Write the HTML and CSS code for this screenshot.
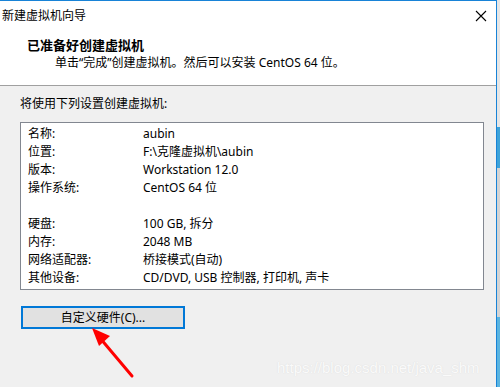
FILE: index.html
```html
<!DOCTYPE html>
<html lang="zh-CN">
<head>
  <meta charset="UTF-8">
  <meta name="viewport" content="width=device-width, initial-scale=1.0">
  <title>新建虚拟机向导</title>
  <link rel="stylesheet" href="styles.css">
</head>
<body>
  <div class="screen">
    <div class="window">
      <div class="titlebar">
        <span class="title">新建虚拟机向导</span>
        <svg class="close" width="12" height="12" viewBox="0 0 12 12">
          <path d="M1 1 L11 11 M11 1 L1 11" stroke="#000" stroke-width="1.1" fill="none"/>
        </svg>
      </div>

      <div class="header">
        <h3>已准备好创建虚拟机</h3>
        <p>单击“完成”创建虚拟机。然后可以安装 CentOS 64 位。</p>
      </div>

      <div class="content">
        <p class="intro">将使用下列设置创建虚拟机:</p>

        <div class="summary">
          <div class="row"><span class="key">名称:</span><span>aubin</span></div>
          <div class="row"><span class="key">位置:</span><span>F:\克隆虚拟机\aubin</span></div>
          <div class="row"><span class="key">版本:</span><span>Workstation 12.0</span></div>
          <div class="row"><span class="key">操作系统:</span><span>CentOS 64 位</span></div>
          <div class="row"></div>
          <div class="row"><span class="key">硬盘:</span><span>100 GB, 拆分</span></div>
          <div class="row"><span class="key">内存:</span><span>2048 MB</span></div>
          <div class="row"><span class="key">网络适配器:</span><span>桥接模式(自动)</span></div>
          <div class="row"><span class="key">其他设备:</span><span>CD/DVD, USB 控制器, 打印机, 声卡</span></div>
        </div>

        <button class="btn">自定义硬件(C)...</button>

        <svg class="arrow" width="60" height="60" viewBox="0 0 60 60">
          <line x1="48" y1="56" x2="16" y2="18" stroke="#f00" stroke-width="3" stroke-linecap="round"/>
          <polygon points="8,8 26,16 15,26" fill="#f00"/>
        </svg>

        <div class="watermark">https://blog.csdn.net/java_shm</div>
      </div>
    </div>

    <div class="desk">
      <div class="desk-a"></div>
      <div class="desk-b"></div>
      <div class="desk-c"></div>
      <div class="desk-b"></div>
    </div>
  </div>
</body>
</html>
```

FILE: styles.css
```css
html, body {
  margin: 0;
  padding: 0;
  height: 387px;
  overflow: hidden;
}
body {
  font-family: "Noto Sans", "Noto Sans CJK SC", sans-serif;
  font-size: 12px;
  color: #000;
  background: #f0f0f0;
}
.screen {
  display: flex;
  height: 387px;
}
.window {
  width: 496px;
  border-top: 1px solid #1883d7;
  border-right: 1px solid #1883d7;
  background: #f0f0f0;
  display: flex;
  flex-direction: column;
}
.titlebar {
  height: 29px;
  background: #fff;
  display: flex;
  align-items: center;
  justify-content: space-between;
  padding: 0 9px 2px 2px;
}
.title {
  line-height: 18px;
}
.close {
  display: block;
}
.header {
  background: #fff;
  padding: 4px 0 13px 0;
  border-bottom: 1px solid #a0a0a0;
}
.header h3 {
  margin: 0 0 0 27px;
  font-size: 13px;
  font-weight: bold;
  line-height: 18px;
}
.header p {
  margin: 0 0 0 55px;
  line-height: 18px;
}
.content {
  position: relative;
  flex: 1;
  padding: 9px 12px 0 20px;
}
.intro {
  margin: 0;
  line-height: 18px;
}
.summary {
  margin-top: 9px;
  background: #fff;
  border: 1px solid #828790;
  padding: 2px 7px;
}
.row {
  display: flex;
  height: 18px;
  line-height: 18px;
}
.key {
  width: 115px;
}
.btn {
  display: block;
  margin: 16px 0 0 1px;
  width: 164px;
  height: 23px;
  padding: 0;
  background: #e1e1e1;
  border: 2px solid #0078d7;
  font-family: inherit;
  font-size: 12px;
  color: #000;
  line-height: 18px;
}
.arrow {
  position: absolute;
  left: 84px;
  top: 234px;
}
.watermark {
  position: absolute;
  left: 277px;
  top: 273px;
  font-family: "Liberation Sans", Arial, sans-serif;
  font-size: 15px;
  color: #fafafa;
  text-shadow: 0 0 1px rgba(200, 200, 200, 0.6);
}
.desk {
  flex: 1;
  display: flex;
  flex-direction: column;
}
.desk-a {
  height: 127px;
  background: #e6e6e6;
}
.desk-b {
  height: 41px;
  background: #3ea3d9;
}
.desk-c {
  height: 149px;
  background: #d4d4d4;
}
.desk .desk-b:last-child {
  flex: 1;
  background: #5ab4e0;
}
```
